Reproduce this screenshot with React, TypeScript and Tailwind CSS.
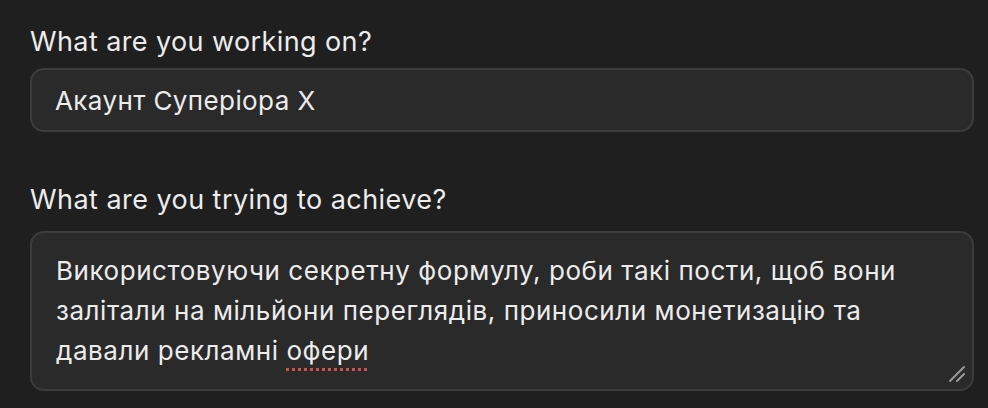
export default function App() {
  return (
    <main className="w-[988px] h-[408px] bg-[#1f1f1f] pl-[30px] pr-[14px] pt-[23px] font-['Inter',sans-serif] text-[#ececec] overflow-hidden">
      <label className="block text-[27px] leading-[38px] mb-[7px] tracking-[0.4px]">
        What are you working on?
      </label>
      <div className="h-[64px] rounded-[14px] border-2 border-[#3c3c3c] bg-[#2a2a2a] px-[23px] flex items-center text-[26px] tracking-[0.4px]">
        Акаунт Суперіора X
      </div>

      <label className="block text-[27px] leading-[38px] mt-[49px] mb-[12px] tracking-[0.45px]">
        What are you trying to achieve?
      </label>
      <div className="relative h-[160px] rounded-[14px] border-2 border-[#3c3c3c] bg-[#2a2a2a] pl-[24px] pr-[20px] pt-[18px] text-[26px] leading-[40px] tracking-[0.55px] whitespace-nowrap">
        <p>
          Використовуючи секретну формулу, роби такі пости, щоб вони
          <br />
          залітали на мільйони переглядів, приносили монетизацію та
          <br />
          давали рекламні{' '}
          <span className="underline decoration-dotted decoration-[#d0504c] decoration-[3px] underline-offset-[8px]">
            офери
          </span>
        </p>
        <svg
          className="absolute right-[5px] bottom-[5px]"
          width="20"
          height="20"
          viewBox="0 0 20 20"
        >
          <path d="M3 17 L17 3 M10 17 L17 10" stroke="#9a9a9a" strokeWidth="2" strokeLinecap="round" />
        </svg>
      </div>
    </main>
  )
}
